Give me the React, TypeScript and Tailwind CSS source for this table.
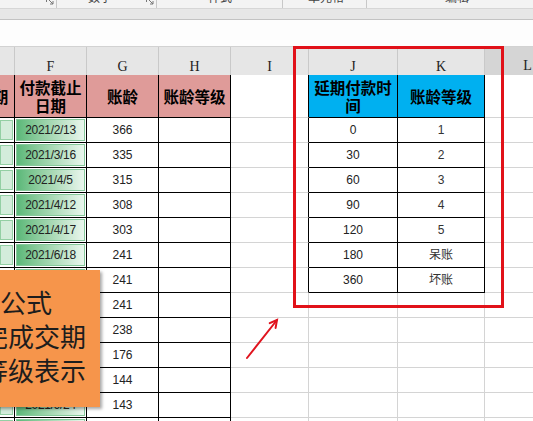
import React from 'react';

const leftRows: [string, string][] = [
  ['2021/2/13', '366'],
  ['2021/3/16', '335'],
  ['2021/4/5', '315'],
  ['2021/4/12', '308'],
  ['2021/4/17', '303'],
  ['2021/6/18', '241'],
  ['2021/6/18', '241'],
  ['2021/6/18', '241'],
  ['2021/6/21', '238'],
  ['2021/8/22', '176'],
  ['2021/9/23', '144'],
  ['2021/9/24', '143'],
  ['2021/9/25', '142'],
];

const rightRows: [string, string][] = [
  ['0', '1'],
  ['30', '2'],
  ['60', '3'],
  ['90', '4'],
  ['120', '5'],
  ['180', '呆账'],
  ['360', '坏账'],
];

const COLS = ['', 'F', 'G', 'H', 'I', 'J', 'K', 'L'];

// r = 0 is the coloured header row, data starts at 1
const inTable = (r: number, c: number) =>
  (r >= 0 && r <= 13 && c >= 0 && c <= 3) || (r >= 0 && r <= 7 && (c === 5 || c === 6));

const Launcher = () => (
  <svg width="8" height="8" viewBox="0 0 8 8" fill="none" stroke="#777" strokeWidth="1" className="mt-[-3px]">
    <path d="M0.5 5V0.5H5" />
    <path d="M2 2L7 7M7 4V7H4" />
  </svg>
);

const RibbonSeg: React.FC<{ w: string; pl: string; label?: string; launcher?: boolean }> = ({ w, pl, label, launcher }) => (
  <div className={`flex items-start justify-between ${w} border-r border-[#c8c8c8] pr-[2px]`}>
    <span className={`${pl} mt-[-9px] leading-[12px] whitespace-nowrap`}>{label}</span>
    {launcher && <Launcher />}
  </div>
);

const Cell: React.FC<{ r: number; c: number; children?: React.ReactNode; bg?: string }> = ({ r, c, children, bg = 'bg-white' }) => {
  const right = inTable(r, c) || inTable(r, c + 1) ? 'border-r-black' : 'border-r-[#d4d4d4]';
  const bottom = inTable(r, c) || inTable(r + 1, c) ? 'border-b-black' : 'border-b-[#d4d4d4]';
  return (
    <div className={`relative flex items-center justify-center overflow-hidden border-r border-b ${right} ${bottom} ${bg}`}>
      {children}
    </div>
  );
};

export default function App() {
  const headText = "font-['Noto_Sans_CJK_SC',sans-serif] font-bold text-[15.5px] leading-[18px] text-black text-center";

  return (
    <div className="relative w-[533px] h-[421px] overflow-hidden bg-white font-['Liberation_Sans',sans-serif]">
      {/* ribbon bottom edge */}
      <div className="flex h-[8px] overflow-hidden bg-[#f3f3f3] text-[12px] text-[#444] font-['Noto_Sans_CJK_SC',sans-serif]">
        <RibbonSeg w="w-[57px]" pl="pl-0" launcher />
        <RibbonSeg w="w-[100px]" pl="pl-[31px]" label="数字" launcher />
        <RibbonSeg w="w-[126px]" pl="pl-[51px]" label="样式" />
        <RibbonSeg w="w-[84px]" pl="pl-[25px]" label="单元格" />
        <div className="flex-1">
          <span className="block pl-[78px] mt-[-9px] leading-[12px]">编辑</span>
        </div>
      </div>
      <div className="h-[12px] bg-[#e7e7e7] border-t border-[#d6d6d6] border-b border-b-[#c3c3c3]" />

      {/* formula bar area */}
      <div className="h-[27px] bg-[#fdfdfd] border-b border-[#d2d2d2]" />

      {/* column letters */}
      <div className="grid grid-cols-[15px_72px_72px_72px_78px_89px_87px_85px] h-[28px] font-['Liberation_Serif',serif] text-[14px] text-[#222]">
        {COLS.map((l, i) =>
          l === 'L' ? (
            <div key={i} className="flex items-center justify-center pt-[8px] bg-[#d5d5d5] border-b-2 border-b-[#217346]">
              {l}
            </div>
          ) : (
            <div key={i} className="flex items-center justify-center pt-[8px] bg-[#e6e6e6] border-r border-[#c9c9c9] border-b border-b-[#bcbcbc]">
              {l}
            </div>
          )
        )}
      </div>

      {/* sheet */}
      <div className="grid grid-cols-[15px_72px_72px_72px_78px_89px_87px_85px] grid-rows-[43px] auto-rows-[25px] text-[12px] text-[#222]">
        <Cell r={0} c={0} bg="bg-[#df9b99]">
          <span className={`${headText} ml-[-13px]`}>期</span>
        </Cell>
        <Cell r={0} c={1} bg="bg-[#df9b99]">
          <span className={headText}>
            付款截止
            <br />
            日期
          </span>
        </Cell>
        <Cell r={0} c={2} bg="bg-[#df9b99]">
          <span className={headText}>账龄</span>
        </Cell>
        <Cell r={0} c={3} bg="bg-[#df9b99]">
          <span className={headText}>账龄等级</span>
        </Cell>
        <Cell r={0} c={4} />
        <Cell r={0} c={5} bg="bg-[#00b0f0]">
          <span className={headText}>
            延期付款时
            <br />
            间
          </span>
        </Cell>
        <Cell r={0} c={6} bg="bg-[#00b0f0]">
          <span className={headText}>账龄等级</span>
        </Cell>
        <Cell r={0} c={7} />

        {leftRows.map(([date, age], i) => {
          const r = i + 1;
          const right = rightRows[i];
          return (
            <React.Fragment key={r}>
              <Cell r={r} c={0}>
                <div className="absolute inset-y-[2px] left-0 right-[1px] bg-[#d3ecdb] border border-[#93cfa4]" />
              </Cell>
              <Cell r={r} c={1}>
                <div className="absolute inset-[1px] bg-linear-to-r from-[#5bb879] to-[#e9f6ed] border border-[#86c99b]" />
                <span className="relative tracking-[-0.3px]">{date}</span>
              </Cell>
              <Cell r={r} c={2}>
                <span>{age}</span>
              </Cell>
              <Cell r={r} c={3} />
              <Cell r={r} c={4} />
              <Cell r={r} c={5}>{right && <span>{right[0]}</span>}</Cell>
              <Cell r={r} c={6}>
                {right && <span className="font-['Liberation_Sans','Noto_Sans_CJK_SC',sans-serif] text-[#333]">{right[1]}</span>}
              </Cell>
              <Cell r={r} c={7} />
            </React.Fragment>
          );
        })}
      </div>

      {/* annotation: red frame round the lookup table */}
      <div className="absolute left-[293px] top-[46px] w-[211px] h-[262px] border-[3px] border-[#e11119]" />

      {/* annotation: orange note */}
      <div className="absolute left-[-100px] top-[270px] w-[200px] h-[137px] bg-[#f6954b] shadow-[2px_2px_3px_rgba(0,0,0,0.35)] pt-[15px] font-['Noto_Sans_CJK_SC',sans-serif] text-[26px] leading-[34px] text-[#1d1d1d] whitespace-nowrap">
        <div className="pl-[48px]">运用公式</div>
        <div className="pl-[82px]">完成交期</div>
        <div className="pl-[82px]">等级表示</div>
      </div>

      {/* annotation: red arrow */}
      <svg className="absolute left-[240px] top-[312px]" width="45" height="52" viewBox="0 0 45 52" fill="none" stroke="#e0141e" strokeWidth="2" strokeLinecap="round">
        <path d="M7 46L37 8" />
        <path d="M29.7 11.2L37 8L35.6 15.9" />
      </svg>
    </div>
  );
}
